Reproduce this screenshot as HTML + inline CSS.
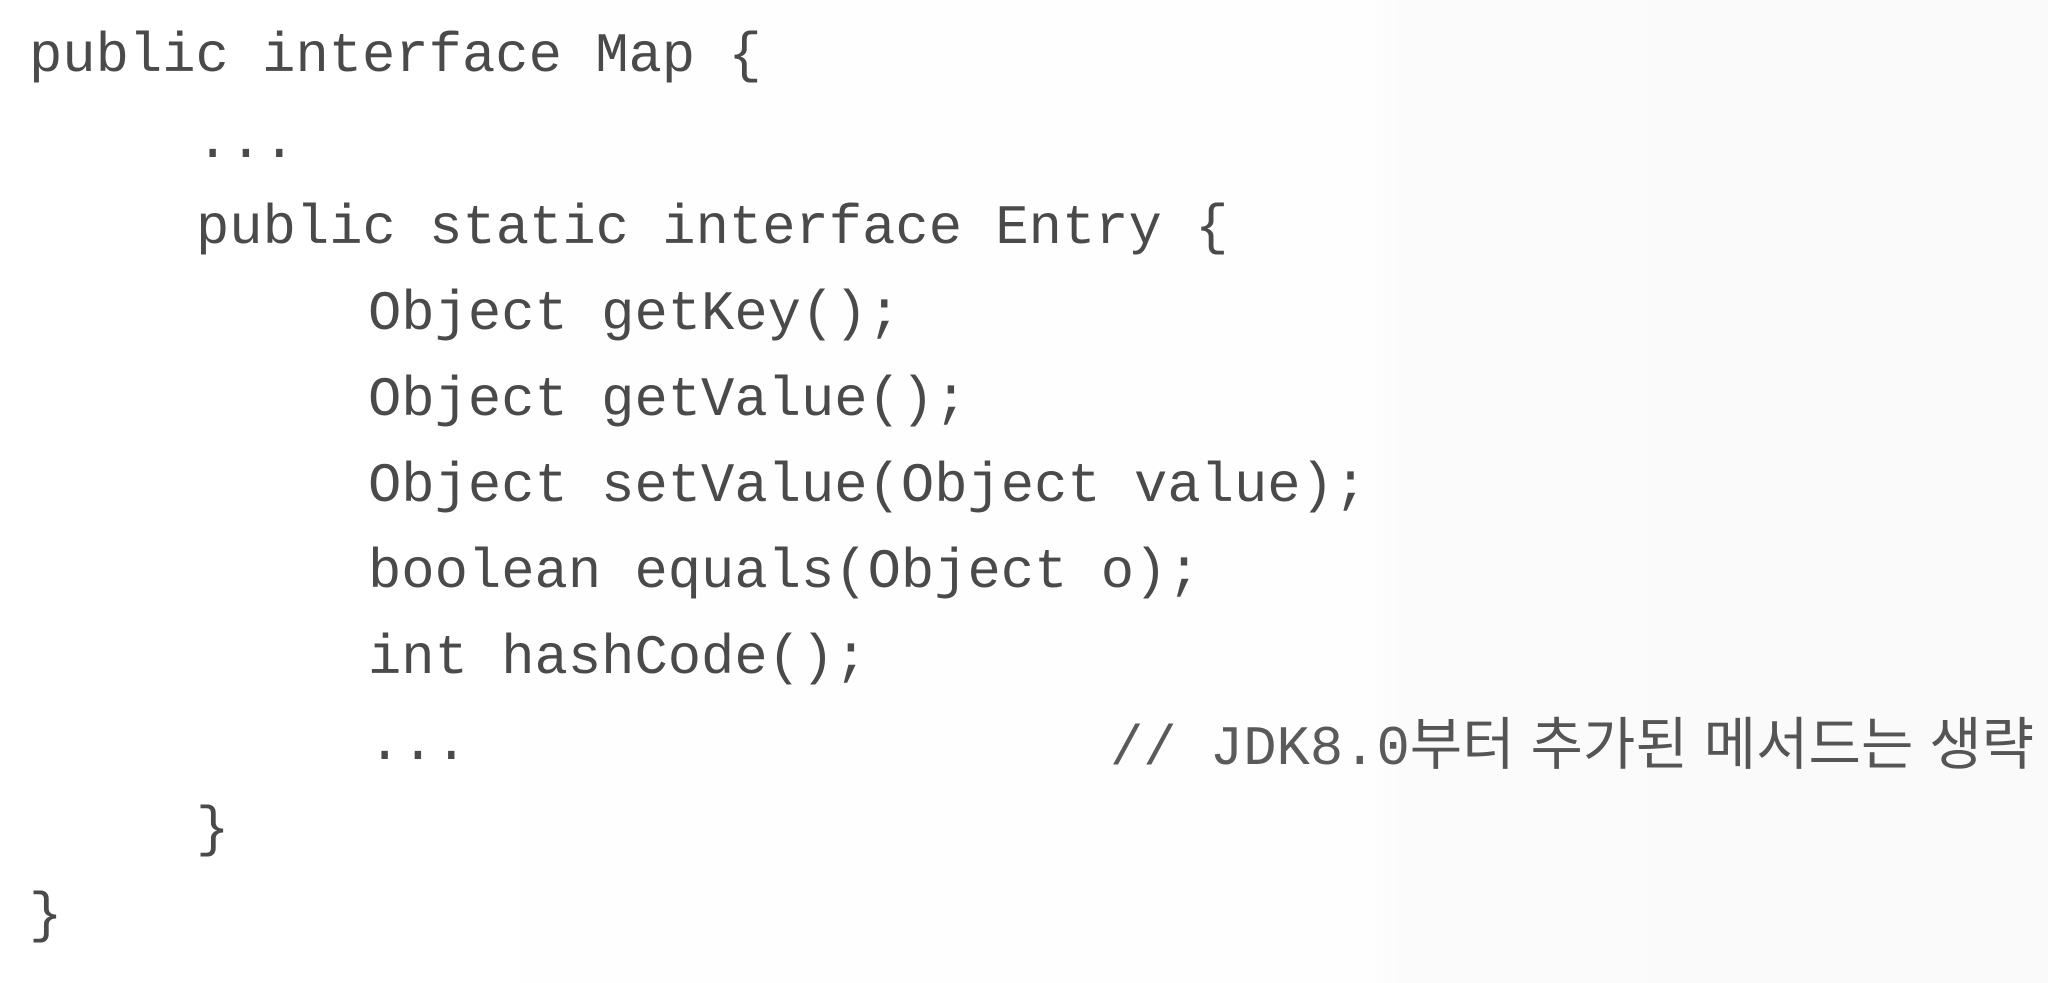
<!DOCTYPE html>
<html><head><meta charset="utf-8"><style>
html,body{margin:0;padding:0;background:#fefefe;}
body{width:2048px;height:983px;position:relative;overflow:hidden;
background:linear-gradient(90deg,#ffffff 0,#fefefe 1370px,#fbfbfb 1400px,#fafafa 100%);}
.l{position:absolute;font-family:"Liberation Mono",monospace;font-size:55.5px;line-height:86px;height:86px;color:#4a4a4a;white-space:pre;}
.k{font-family:"Liberation Sans","Noto Sans CJK KR",sans-serif;font-size:57px;color:#555;}
.c{color:#5a5a5a;}
</style></head><body>
<div class="l" style="left:29px;top:14px">public interface Map {</div>
<div class="l" style="left:196px;top:100px">...</div>
<div class="l" style="left:196px;top:186px">public static interface Entry {</div>
<div class="l" style="left:368px;top:272px">Object getKey();</div>
<div class="l" style="left:368px;top:358px">Object getValue();</div>
<div class="l" style="left:368px;top:444px">Object setValue(Object value);</div>
<div class="l" style="left:368px;top:530px">boolean equals(Object o);</div>
<div class="l" style="left:368px;top:616px">int hashCode();</div>
<div class="l" style="left:368px;top:702px">...</div>
<div class="l c" style="left:1110px;top:702px">// JDK8.0<span class="k">부터 추가된 메서드는 생략</span></div>
<div class="l" style="left:196px;top:788px">}</div>
<div class="l" style="left:29px;top:874px">}</div>
</body></html>
